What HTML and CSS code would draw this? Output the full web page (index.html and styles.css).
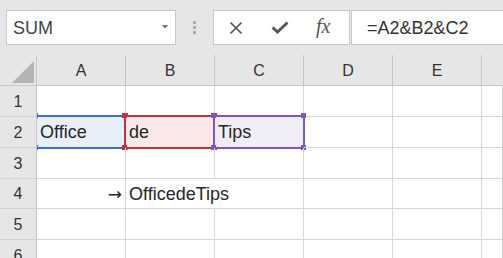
FILE: index.html
```html
<!DOCTYPE html>
<html>
<head>
<meta charset="utf-8">
<link rel="stylesheet" href="styles.css">
</head>
<body>
<div class="toolbar">
  <div class="namebox">
    <span class="name">SUM</span>
    <svg class="caret" width="6" height="4" viewBox="0 0 6 4"><path d="M0 0H6L3 3.5Z" fill="#707070"/></svg>
  </div>
  <div class="grip"><i></i><i></i><i></i></div>
  <div class="fbtns">
    <span class="btn"><svg width="14" height="14" viewBox="0 0 14 14"><path d="M1.5 1.5L12.5 12.5M12.5 1.5L1.5 12.5" stroke="#555" stroke-width="1.7" fill="none"/></svg></span>
    <span class="btn"><svg width="18" height="13" viewBox="0 0 18 13"><path d="M1.5 6.5L6.5 11L16.5 1.5" stroke="#555" stroke-width="2.8" fill="none"/></svg></span>
    <span class="btn fx">fx</span>
  </div>
  <div class="finput">=A2&amp;B2&amp;C2</div>
</div>
<div class="sheet">
  <div class="corner"><div class="tri"></div></div>
  <div class="colhead">A</div><div class="colhead">B</div><div class="colhead">C</div><div class="colhead">D</div><div class="colhead">E</div><div class="colhead last"></div>

  <div class="rowhead">1</div><div class="cell"></div><div class="cell"></div><div class="cell"></div><div class="cell"></div><div class="cell"></div><div class="cell"></div>

  <div class="rowhead">2</div>
  <div class="cell rng blue">Office<b class="frame"></b><i class="h tl"></i><i class="h tr"></i><i class="h bl"></i><i class="h br"></i></div>
  <div class="cell rng red">de<b class="frame"></b><i class="h tl"></i><i class="h tr"></i><i class="h bl"></i><i class="h br"></i></div>
  <div class="cell rng purple">Tips<b class="frame"></b><i class="h tl"></i><i class="h tr"></i><i class="h bl"></i><i class="h br"></i></div>
  <div class="cell"></div><div class="cell"></div><div class="cell"></div>

  <div class="rowhead">3</div><div class="cell"></div><div class="cell"></div><div class="cell"></div><div class="cell"></div><div class="cell"></div><div class="cell"></div>

  <div class="rowhead">4</div><div class="cell right"><span class="arrow">→</span></div><div class="cell spill">OfficedeTips</div><div class="cell"></div><div class="cell"></div><div class="cell"></div><div class="cell"></div>

  <div class="rowhead">5</div><div class="cell"></div><div class="cell"></div><div class="cell"></div><div class="cell"></div><div class="cell"></div><div class="cell"></div>

  <div class="rowhead">6</div><div class="cell"></div><div class="cell"></div><div class="cell"></div><div class="cell"></div><div class="cell"></div><div class="cell"></div>
</div>
</body>
</html>
```

FILE: styles.css
```css
html, body {
  margin: 0;
  padding: 0;
  background: #ffffff;
  overflow: hidden;
  width: 503px;
  height: 258px;
  font-family: "Liberation Sans", Arial, sans-serif;
}

.toolbar {
  display: flex;
  align-items: flex-start;
  height: 55px;
  padding-top: 10px;
  box-sizing: border-box;
  background: #e6e6e6;
}

.namebox {
  display: flex;
  align-items: center;
  justify-content: space-between;
  box-sizing: border-box;
  margin-left: 6px;
  width: 170px;
  height: 35px;
  background: #fff;
  border: 1px solid #c8c8c8;
  padding: 2px 7px 0 6px;
}

.name {
  font-size: 18px;
  color: #444;
}

.caret {
  margin-top: -3px;
}

.grip {
  width: 37px;
  height: 35px;
  display: flex;
  flex-direction: column;
  align-items: center;
  justify-content: center;
  gap: 2px;
}

.grip i {
  display: block;
  width: 3px;
  height: 3px;
  background: #ababab;
}

.fbtns {
  display: flex;
  box-sizing: border-box;
  width: 137px;
  height: 35px;
  margin-right: 1px;
  background: #fff;
  border: 1px solid #c8c8c8;
}

.btn {
  width: 45px;
  display: flex;
  align-items: center;
  justify-content: center;
}

.btn svg {
  display: block;
}

.fx {
  font-family: "Liberation Serif", "Times New Roman", serif;
  font-style: italic;
  font-size: 20px;
  color: #555;
  padding-right: 4px;
  padding-bottom: 2px;
}

.finput {
  flex: 1;
  height: 35px;
  box-sizing: border-box;
  margin-right: -3px;
  background: #fff;
  border: 1px solid #c8c8c8;
  padding: 2px 0 0 15px;
  display: flex;
  align-items: center;
  font-size: 18px;
  color: #333;
}

.sheet {
  display: grid;
  grid-template-columns: 37px repeat(5, 89px) 1fr;
  grid-template-rows: 31px 31px 31px 31px 30px 31px 31px;
}

.corner {
  background: #e6e6e6;
  border-right: 1px solid #c6c6c6;
  border-bottom: 1px solid #c6c6c6;
  display: flex;
  justify-content: flex-end;
  align-items: flex-end;
  padding: 0 2px 2px 0;
  position: relative;
  z-index: 3;
}

.tri {
  width: 22px;
  height: 22px;
  background: #b4b4b4;
  clip-path: polygon(100% 0, 100% 100%, 0 100%);
}

.colhead {
  background: #e6e6e6;
  border-right: 1px solid #c6c6c6;
  border-bottom: 1px solid #c6c6c6;
  display: flex;
  align-items: center;
  justify-content: center;
  font-size: 16px;
  color: #333;
  padding-top: 2px;
}

.colhead.last {
  border-right: none;
}

.rowhead {
  background: #e6e6e6;
  border-right: 1px solid #c6c6c6;
  border-bottom: 1px solid #d2d2d2;
  display: flex;
  align-items: center;
  justify-content: center;
  font-size: 16px;
  color: #333;
  padding-top: 1px;
  position: relative;
  z-index: 3;
}

.cell {
  border-right: 1px solid #d6d6d6;
  border-bottom: 1px solid #d6d6d6;
  display: flex;
  align-items: center;
  padding: 1px 3px 0 3px;
  font-size: 18px;
  color: #262626;
  white-space: nowrap;
  position: relative;
}

.cell.right {
  justify-content: flex-end;
  padding-right: 3px;
}

.arrow {
  font-family: "DejaVu Sans", sans-serif;
  font-size: 17px;
  color: #262626;
}

.cell.spill {
  border-right-color: #ffffff;
  overflow: visible;
  z-index: 1;
}

.rng .frame {
  position: absolute;
  left: -2px;
  top: -2px;
  right: -2px;
  bottom: -2px;
  border: 2px solid;
  pointer-events: none;
}

.rng .h {
  position: absolute;
  width: 5px;
  height: 5px;
}

.h.tl { left: -4px; top: -4px; }
.h.tr { right: -3px; top: -4px; }
.h.bl { left: -4px; bottom: -3px; }
.h.br { right: -3px; bottom: -3px; }

.blue { background: #e8eff9; }
.blue .frame { border-color: #3a70c6; }
.blue .h { background: #3a70c6; }

.red { background: #fbe9e9; }
.red .frame { border-color: #c5323c; }
.red .h { background: #c5323c; }

.purple { background: #f0ecf8; }
.purple .frame { border-color: #7f56c0; }
.purple .h { background: #7f56c0; }
```
